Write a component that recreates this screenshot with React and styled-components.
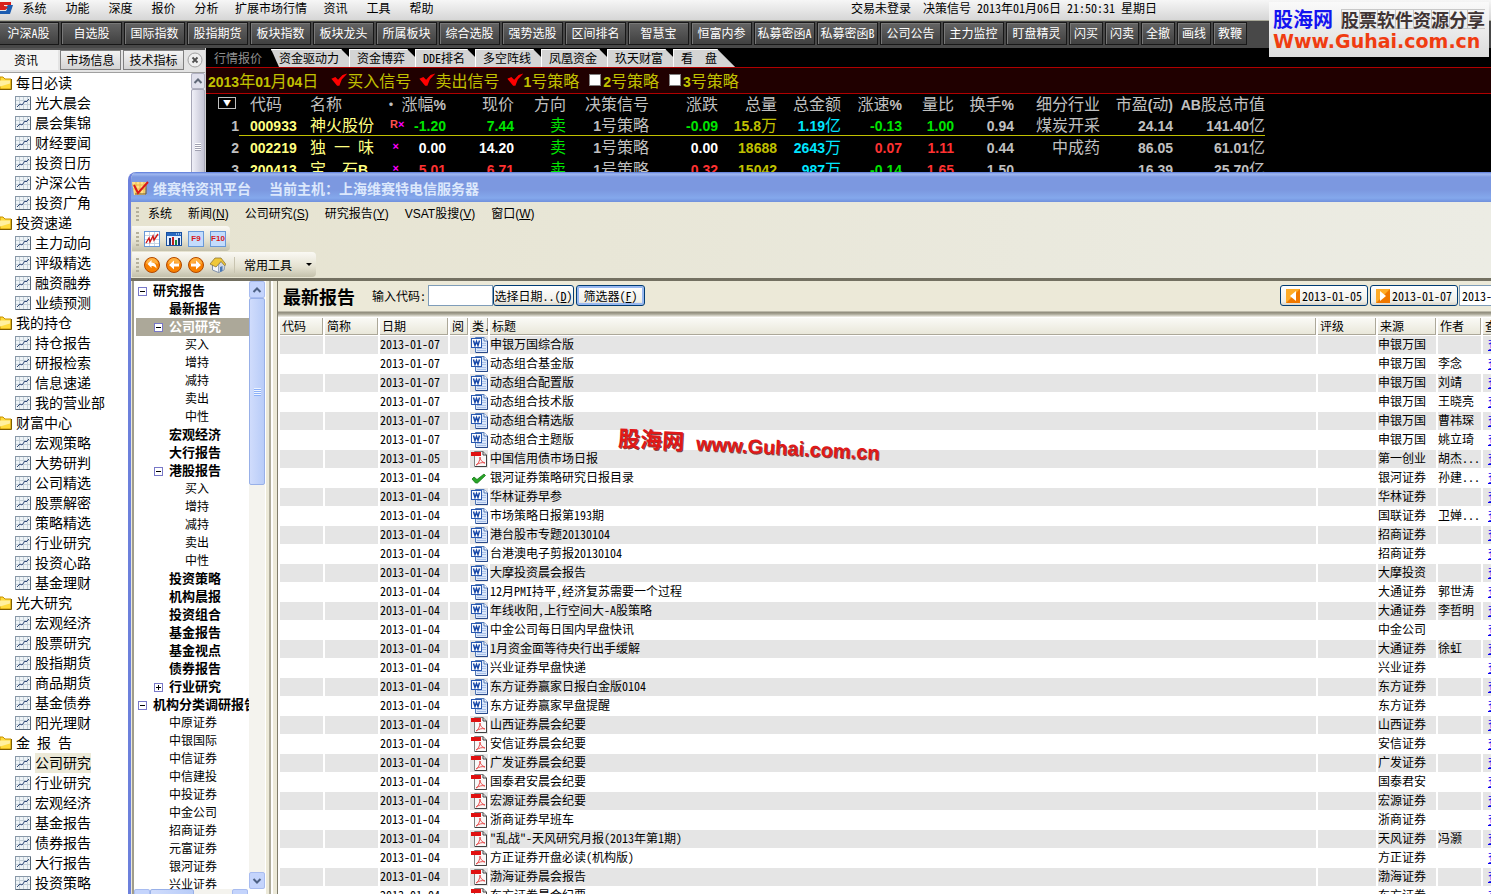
import React, { useState } from 'react';
import styled, { createGlobalStyle, css } from 'styled-components';

const sans = '"Noto Sans Mono CJK SC", "Noto Sans CJK SC", sans-serif';
const mixed = '"Liberation Sans", "Noto Sans CJK SC", sans-serif';

const GlobalStyle = createGlobalStyle`
    * { box-sizing: border-box; }
    html, body, #root { height: 100%; }
    body {
        margin: 0;
        overflow: hidden;
        background: #000;
        color: #000;
        font: 12px/16px ${sans};
    }
    button, input { font: inherit; color: inherit; }
    button { padding: 0; margin: 0; border: 0; background: none; white-space: nowrap; }
    ul { list-style: none; margin: 0; padding: 0; }
`;

/* ---------- data ---------- */

const MENU = ['系统', '功能', '深度', '报价', '分析', '扩展市场行情', '资讯', '工具', '帮助'];

const SHORTCUTS = ['沪深A股', '自选股', '国际指数', '股指期货', '板块指数', '板块龙头', '所属板块', '综合选股', '强势选股',
    '区间排名', '智慧宝', '恒富内参', '私募密函A', '私募密函B', '公司公告', '主力监控', '盯盘精灵',
    '闪买', '闪卖', '全撤', '画线', '教鞭'];

const SIDE = [
    ['每日必读', ['光大晨会', '晨会集锦', '财经要闻', '投资日历', '沪深公告', '投资广角']],
    ['投资速递', ['主力动向', '评级精选', '融资融券', '业绩预测']],
    ['我的持仓', ['持仓报告', '研报检索', '信息速递', '我的营业部']],
    ['财富中心', ['宏观策略', '大势研判', '公司精选', '股票解密', '策略精选', '行业研究', '投资心路', '基金理财']],
    ['光大研究', ['宏观经济', '股票研究', '股指期货', '商品期货', '基金债券', '阳光理财']],
    ['金 报 告', ['公司研究', '行业研究', '宏观经济', '基金报告', '债券报告', '大行报告', '投资策略']],
];

const QUOTE_TABS = ['资金驱动力', '资金博弈', 'DDE排名', '多空阵线', '凤凰资金', '玖天财富', '看　盘'];

const QUOTE_COLS = [33, 64, 80, 16, 47, 68, 52, 83, 69, 59, 64, 61, 52, 60, 86, 73, 92];
const QUOTE_HEAD = ['涨幅%', '现价', '方向', '决策信号', '涨跌', '总量', '总金额', '涨速%', '量比', '换手%', '细分行业', '市盈(动)', 'AB股总市值'];

const GREEN = '#00e600';
const RED = '#ff3232';
const WHITE = '#fff';
const GREY = '#c0c0c0';
const GOLD = '#c0c000';
const CYAN = '#00e6ff';

const QUOTES = [
    { code: '000933', name: '神火股份', r: true, cells: [['-1.20', GREEN], ['7.44', GREEN], ['卖', GREEN], ['1号策略', GREY], ['-0.09', GREEN], ['15.8万', GOLD], ['1.19亿', CYAN], ['-0.13', GREEN], ['1.00', GREEN], ['0.94', GREY], ['煤炭开采', GREY], ['24.14', GREY], ['141.40亿', GREY]] },
    { code: '002219', name: '独 一 味', cells: [['0.00', WHITE], ['14.20', WHITE], ['卖', GREEN], ['1号策略', GREY], ['0.00', WHITE], ['18688', GOLD], ['2643万', CYAN], ['0.07', RED], ['1.11', RED], ['0.44', GREY], ['中成药', GREY], ['86.05', GREY], ['61.01亿', GREY]] },
    { code: '200413', name: '宝　石B', cells: [['5.01', RED], ['6.71', RED], ['卖', GREEN], ['1号策略', GREY], ['0.32', RED], ['15042', GOLD], ['987万', CYAN], ['-0.14', GREEN], ['1.65', RED], ['1.50', GREY], ['', GREY], ['16.39', GREY], ['25.70亿', GREY]] },
];

// level, label, toggle sign
const TREE = [
    [0, '研究报告', '-'], [1, '最新报告'], [1, '公司研究', '-'],
    [2, '买入'], [2, '增持'], [2, '减持'], [2, '卖出'], [2, '中性'],
    [1, '宏观经济'], [1, '大行报告'], [1, '港股报告', '-'],
    [2, '买入'], [2, '增持'], [2, '减持'], [2, '卖出'], [2, '中性'],
    [1, '投资策略'], [1, '机构晨报'], [1, '投资组合'], [1, '基金报告'], [1, '基金视点'], [1, '债券报告'], [1, '行业研究', '+'],
    [0, '机构分类调研报告', '-'],
    [3, '中原证券'], [3, '中银国际'], [3, '中信证券'], [3, '中信建投'], [3, '中投证券'], [3, '中金公司'],
    [3, '招商证券'], [3, '元富证券'], [3, '银河证券'], [3, '兴业证券'],
];

const REPORTS = [
    ['2013-01-07', 'w', '申银万国综合版', '申银万国', ''],
    ['2013-01-07', 'w', '动态组合基金版', '申银万国', '李念'],
    ['2013-01-07', 'w', '动态组合配置版', '申银万国', '刘靖'],
    ['2013-01-07', 'w', '动态组合技术版', '申银万国', '王晓亮'],
    ['2013-01-07', 'w', '动态组合精选版', '申银万国', '曹祎琛'],
    ['2013-01-07', 'w', '动态组合主题版', '申银万国', '姚立琦'],
    ['2013-01-05', 'p', '中国信用债市场日报', '第一创业', '胡杰...'],
    ['2013-01-04', 'c', '银河证券策略研究日报目录', '银河证券', '孙建...'],
    ['2013-01-04', 'w', '华林证券早参', '华林证券', ''],
    ['2013-01-04', 'w', '市场策略日报第193期', '国联证券', '卫婵...'],
    ['2013-01-04', 'w', '港台股市专题20130104', '招商证券', ''],
    ['2013-01-04', 'w', '台港澳电子剪报20130104', '招商证券', ''],
    ['2013-01-04', 'w', '大摩投资晨会报告', '大摩投资', ''],
    ['2013-01-04', 'w', '12月PMI持平,经济复苏需要一个过程', '大通证券', '郭世涛'],
    ['2013-01-04', 'w', '年线收阳,上行空间大-A股策略', '大通证券', '李哲明'],
    ['2013-01-04', 'w', '中金公司每日国内早盘快讯', '中金公司', ''],
    ['2013-01-04', 'w', '1月资金面等待央行出手缓解', '大通证券', '徐虹'],
    ['2013-01-04', 'w', '兴业证券早盘快递', '兴业证券', ''],
    ['2013-01-04', 'w', '东方证券赢家日报白金版0104', '东方证券', ''],
    ['2013-01-04', 'w', '东方证券赢家早盘提醒', '东方证券', ''],
    ['2013-01-04', 'p', '山西证券晨会纪要', '山西证券', ''],
    ['2013-01-04', 'p', '安信证券晨会纪要', '安信证券', ''],
    ['2013-01-04', 'p', '广发证券晨会纪要', '广发证券', ''],
    ['2013-01-04', 'p', '国泰君安晨会纪要', '国泰君安', ''],
    ['2013-01-04', 'p', '宏源证券晨会纪要', '宏源证券', ''],
    ['2013-01-04', 'p', '浙商证券早班车', '浙商证券', ''],
    ['2013-01-04', 'p', '"乱战"-天风研究月报(2013年第1期)', '天风证券', '冯灏'],
    ['2013-01-04', 'p', '方正证券开盘必读(机构版)', '方正证券', ''],
    ['2013-01-04', 'p', '渤海证券晨会报告', '渤海证券', ''],
    ['2013-01-04', 'p', '东方证券晨会纪要', '东方证券', ''],
];

/* ---------- icons ---------- */

const AppLogo = () => (
    <svg width="13" height="12" viewBox="0 0 13 12">
        <path d="M0 0h11v3H4v1l4 1-3 3-5-2z" fill="#d8201c" />
        <path d="M8 3h5L10 12H0V9h6l1-2-2-1z" fill="#1c5cb0" />
        <path d="M0 0h11l-1 3H3v1l5 1-3 3H0V5h3L0 4z" fill="#d8201c" />
    </svg>
);

const FolderIcon = () => (
    <svg width="12" height="14" viewBox="0 0 12 14">
        <path d="M0 1h3l2 2h6v10H0z" fill="#ffdc3c" stroke="#c89000" />
        <path d="M0 4.500h10v3l-10 3z" fill="#fff0a0" />
        <path d="M11.500 3v10.500H0" fill="none" stroke="#806000" />
    </svg>
);

const SheetIcon = () => (
    <svg width="16" height="14" viewBox="0 0 16 14">
        <rect x=".5" y=".5" width="15" height="13" fill="#eef3f6" stroke="#8898a8" />
        <path d="M4.500 1v12M8.500 1v12M12.500 1v12M1 4.500h14M1 8.500h14" stroke="#c4d0d8" fill="none" />
        <path d="M2 11l3-3 2 1 3-4 1 1 3-3" fill="none" stroke="#304878" />
        <path d="M15.500 1v12.500H1" fill="none" stroke="#586878" />
    </svg>
);

const CloseIcon = () => (
    <svg width="16" height="16" viewBox="0 0 16 16">
        <circle cx="8" cy="8" r="7" fill="#f0f0f0" stroke="#a0a0a0" />
        <path d="M5.500 5.500l5 5M10.500 5.500l-5 5" stroke="#505050" strokeWidth="1.800" />
    </svg>
);

const TitleIcon = () => (
    <svg width="17" height="14" viewBox="0 0 17 14">
        <path d="M0 1h13l2 1-2 12H2z" fill="#ffe088" />
        <path d="M0 4h14M1 8h13M4 1v12M8 1v12M12 1v12" stroke="#e8b848" fill="none" />
        <path d="M14 4v9H3" stroke="#705830" fill="none" />
        <path d="M2 4l4 8L16 1" fill="none" stroke="#d81818" strokeWidth="2" />
    </svg>
);

const TrendIcon = () => (
    <svg width="16" height="16" viewBox="0 0 16 16">
        <rect x=".5" y=".5" width="15" height="15" fill="#fff" stroke="#6898d8" />
        <path d="M1 4.500h14M1 8.500h14M1 12.500h14M5.500 1v14M10.500 1v14" stroke="#c8d4e4" fill="none" />
        <path d="M2 12l3-5 1 4 3-6 1 4 4-6" fill="none" stroke="#d01818" strokeWidth="1.400" />
    </svg>
);

const BarsIcon = () => (
    <svg width="16" height="14" viewBox="0 0 16 14">
        <rect x=".5" y=".5" width="15" height="13" fill="#e4f0ff" stroke="#1850a0" />
        <path d="M1 2.500h14" stroke="#2868c0" strokeWidth="3" />
        <path d="M10 2h1M12 2h1M14 2h1" stroke="#fff" />
        <path d="M3 6h2v7H3z" fill="#183878" />
        <path d="M6 5h2v8H6z" fill="#c02020" />
        <path d="M9 8h2v5H9z" fill="#208838" />
        <path d="M12 6h2v7h-2z" fill="#183878" />
    </svg>
);

const Arrows = {
    undo: 'M3.500 7l4-4v2.500c3 0 5 2 5 6-1.500-2-3-2.500-5-2.500v2z',
    back: 'M3 8l5-4.500V6.500h5v3H8v3z',
    next: 'M13 8L8 3.500V6.500H3v3h5v3z',
};

const OrbIcon = ({ kind }) => (
    <svg width="16" height="16" viewBox="0 0 16 16">
        <circle cx="8" cy="8" r="7.500" fill="#f88000" stroke="#b04800" />
        <path d="M2 7a6 6 0 0 1 12 0c-4-2-8-2-12 0z" fill="#ffb040" />
        <path d={Arrows[kind]} fill="#fff" />
    </svg>
);

const HomeIcon = () => (
    <svg width="16" height="16" viewBox="0 0 16 16">
        <path d="M2.500 8v5l6 2.500 5.500-3V7L10 3z" fill="#f4f6fa" stroke="#8090a8" />
        <path d="M8.500 15.500V8L11 4l4 4-1 5z" fill="#d0d8e4" stroke="#8090a8" strokeWidth=".7" />
        <path d="M0 7l5-6h6l5 6.500-1.500 1L11 4.500 6 10z" fill="#f0c838" stroke="#806830" strokeWidth=".7" />
        <path d="M10 10l2.500-1v5L10 15z" fill="#4878b8" />
    </svg>
);

const WordIcon = () => (
    <svg width="17" height="16" viewBox="0 0 17 16">
        <path d="M4.500.5H13l3.500 3.500v11.500h-12z" fill="#dce8fa" stroke="#5078b8" />
        <path d="M13 .5V4h3.500" fill="#fff" stroke="#5078b8" />
        <path d="M11 6.500h4M11 8.500h4M6 11.500h9M6 13.500h9" stroke="#a8c0e8" />
        <path d="M16.500 4v11.500H5" fill="none" stroke="#284888" />
        <rect x=".5" y="1.500" width="10" height="9" fill="#fff" stroke="#2858b0" />
        <path d="M2.500 3.500L4 8.500l1.500-4 1.500 4L8.500 3.500" fill="none" stroke="#1848a8" strokeWidth="1.500" />
    </svg>
);

const PdfIcon = () => (
    <svg width="17" height="16" viewBox="0 0 17 16">
        <path d="M3.500.5H12L15.500 4v11.500h-12z" fill="#f8f8f8" stroke="#808080" />
        <path d="M12 .5V4h3.500v11.500H4" fill="none" stroke="#404040" />
        <path d="M0 1h10v4H0z" fill="#e01010" />
        <path d="M5 14c2-1 4-4 4-8 0 3 2 5 5 6-3-1-6 0-9 2z" fill="none" stroke="#e85050" />
    </svg>
);

const CheckIcon = () => (
    <svg width="17" height="16" viewBox="0 0 17 16">
        <path d="M1 9l2-2 3 2.500L13 4l1.500 1.500L6.500 13h-2z" fill="#28a428" stroke="#087008" strokeWidth=".7" />
    </svg>
);

const FILE_ICONS = { w: WordIcon, p: PdfIcon, c: CheckIcon };

const StepIcon = ({ back }) => (
    <svg width="14" height="14" viewBox="0 0 14 14">
        <rect width="14" height="14" fill="#f07800" />
        <path d="M0 14V0h14z" fill="#ffac28" />
        <path d={back ? 'M10 2v10L4 7z' : 'M4 2v10l6-5z'} fill="#fff" />
    </svg>
);

const ToggleIcon = ({ sign }) => (
    <svg width="9" height="9" viewBox="0 0 9 9">
        <rect x=".5" y=".5" width="8" height="8" fill="#fff" stroke="#7878c8" />
        <path d={sign === '+' ? 'M2 4.500h5M4.500 2v5' : 'M2 4.500h5'} stroke="#000" />
    </svg>
);

const Chevron = ({ dir = 'up', color = '#4d6185' }) => (
    <svg width="10" height="8" viewBox="0 0 10 8">
        <path
            d={{ up: 'M1.500 6L5 2.500 8.500 6', down: 'M1.500 2L5 5.500 8.500 2', left: 'M6.500 0L3 3.500 6.500 7', right: 'M3.500 0L7 3.500 3.500 7' }[dir]}
            fill="none" stroke={color} strokeWidth="2"
        />
    </svg>
);

/* ---------- main terminal ---------- */

const Screen = styled.div`
    position: relative;
    height: 100vh;
    display: flex;
    flex-direction: column;
    overflow: hidden;
`;

const MenuBar = styled.header`
    display: flex;
    align-items: center;
    flex: none;
    height: 21px;
    padding-bottom: 4px;
    background: linear-gradient(#f6f6f6, #d6d6d6);
    border-bottom: 1px solid #a8a898;
`;

const MenuItem = styled.button`
    min-width: 43px;
    padding: 0 7px;
`;

const Status = styled.div`
    display: flex;
    gap: 12px;
    margin-left: auto;
    padding-right: 334px;
    white-space: nowrap;

    time { margin-left: -6px; }
`;

const Shortcuts = styled.nav`
    display: flex;
    flex: none;
    gap: 2px;
    height: 27px;
    padding: 1px 0 3px;
    margin-left: -2px;
    background: #484848;
`;

const Shortcut = styled.button`
    flex: none;
    width: ${p => p.$small ? 34 : 61}px;
    padding-bottom: 2px;
    color: #fff;
    border: 1px solid #181818;
    box-shadow: inset 1px 1px #787878;
    background: linear-gradient(#646464, #404040);
`;

const Body = styled.div`
    display: flex;
    flex: 1;
    min-height: 0;
`;

const Side = styled.aside`
    display: flex;
    flex-direction: column;
    flex: none;
    width: 206px;
    background: #fff;
    border-right: 1px solid #d0d0d0;
`;

const SideTabs = styled.div`
    display: flex;
    flex: none;
    align-items: flex-end;
    gap: 2px;
    height: 25px;
    padding: 0 2px 2px 0;
    background: #e4e4e4;
    border-top: 2px solid #585858;
    border-bottom: 1px solid #a0a0a0;
`;

const SideTab = styled.button`
    flex: none;
    width: ${p => p.$active ? 58 : 61}px;
    height: 20px;
    ${p => p.$active ? css`
        padding-right: 6px;
        background: #f4f4f4;
    ` : css`
        border: 1px solid #808080;
        background: linear-gradient(#f4f4f4, #d4d4d4);
    `}
`;

const CloseButton = styled.button`
    display: flex;
    margin-left: auto;
    padding-bottom: 2px;
`;

const SideScroll = styled.div`
    display: flex;
    flex: 1;
    min-height: 0;
`;

const SideList = styled.ul`
    flex: 1;
    overflow: hidden;
    font-size: 14px;
    line-height: 18px;
`;

const SideRow = styled.li`
    display: flex;
    align-items: center;
    gap: 4px;
    height: 20px;
    padding-left: ${p => p.$leaf ? 15 : 0}px;
    white-space: pre;

    svg { flex: none; }
    span {
        padding-bottom: 2px;
        background: ${p => p.$active ? '#ece9d8' : 'none'};
    }
`;

const GreyBar = styled.div`
    display: flex;
    flex-direction: column;
    width: 14px;
    background: #e8e8f0;
`;

const GreyButton = styled.button`
    display: flex;
    align-items: center;
    justify-content: center;
    height: 16px;
    border: 1px solid #b0b0c0;
    border-radius: 2px;
    background: #e0e0ec;
`;

const GreyThumb = styled.div`
    display: flex;
    align-items: center;
    justify-content: center;
    height: 116px;
    border: 1px solid #a8a8b8;
    border-radius: 2px;
    background: linear-gradient(90deg, #f0f0f8, #c4c4d4);

    &::after {
        content: '';
        width: 6px;
        height: 8px;
        background: repeating-linear-gradient(#fff 0 1px, #a0a0b0 1px 2px);
    }
`;

const Market = styled.main`
    flex: 1;
    min-width: 0;
    color: ${GREY};
    background: #000;
    overflow: hidden;
`;

const QuoteTabs = styled.div`
    display: flex;
    height: 19px;
    padding-top: 1px;
`;

const QuoteTab = styled.button`
    flex: none;
    padding: 0 10px 0 8px;
    color: #000;
    background: #d4d4d4;
    box-shadow: inset 1px 1px #fff;
    clip-path: polygon(0 0, calc(100% - 8px) 0, 100% 8px, 100% 100%, 0 100%);

    &:first-of-type {
        color: #909090;
        width: 65px;
        background: #000;
        box-shadow: none;
        clip-path: none;
    }

    &:nth-of-type(2) {
        clip-path: polygon(0 0, calc(100% - 8px) 0, 100% 8px, 100% 100%, 8px 100%);
    }

    &:last-of-type {
        padding-right: 18px;
        clip-path: polygon(0 0, calc(100% - 18px) 0, 100% 100%, 0 100%);
    }
`;

const Signals = styled.div`
    display: flex;
    align-items: center;
    gap: 8px;
    height: 27px;
    padding: 0 0 2px 2px;
    color: ${GOLD};
    font-size: 16px;
    line-height: 24px;
    white-space: nowrap;
    background: #200000;
    border-top: 1px solid #b00000;
    border-bottom: 1px solid #b00000;

    time { margin-right: 5px; }
`;

const Signal = styled.label`
    display: flex;
    align-items: center;
`;

const Tick = styled.input`
    appearance: none;
    width: 12px;
    height: 12px;
    margin: 0 2px;
    background: #fff;
    border: 1px solid #808080;

    &:checked {
        height: 14px;
        width: 16px;
        margin: 0;
        border: 0;
        background: linear-gradient(125deg, #ff0000 70%, #a04040);
        clip-path: polygon(0 45%, 25% 32%, 42% 52%, 70% 18%, 100% 8%, 65% 50%, 50% 95%, 36% 95%);
    }
`;

const Digits = styled.b`
    font: bold 14px/14px "Liberation Sans", sans-serif;
`;

const Quotes = styled.table`
    width: 1059px;
    table-layout: fixed;
    border-collapse: separate;
    border-spacing: 0;
    font-size: 16px;
    line-height: 18px;

    th, td {
        height: 22px;
        padding: 0 0 2px;
        font-weight: normal;
        text-align: right;
        white-space: pre;
    }
    th { height: 20px; }
    th:nth-child(2), td:nth-child(2) { text-align: left; padding-left: 11px; }
    th:nth-child(3), td:nth-child(3) { text-align: left; padding-left: 7px; }
    th:nth-child(4) { text-align: left; }
    td:nth-child(2), td:nth-child(3) { color: #ffff80; }
    tr[aria-selected='true'] td:not(:first-child) { border-bottom: 1px solid ${GOLD}; }
`;

const SortBox = styled.button`
    display: block;
    width: 18px;
    height: 12px;
    margin-left: 12px;
    border: 1px solid #c0c0c0;
    color: #fff;
    font-size: 8px;
    line-height: 8px;
`;

const Mark = styled.span`
    display: flex;
    align-items: center;
    padding-left: 7px;
    color: #ff00ff;
    font: bold 11px/18px "Liberation Sans", sans-serif;

    b { width: 8px; color: #ff5050; }
`;

const Banner = styled.div`
    position: absolute;
    top: 2px;
    right: 2px;
    width: 220px;
    height: 55px;
    padding: 4px 4px 0;
    background: linear-gradient(#fafafa, #dcdcdc);
    white-space: nowrap;
`;

const BannerTop = styled.div`
    display: flex;
    align-items: center;
    justify-content: space-between;
    height: 25px;
    font-size: 18px;
    color: #403434;

    b { font-size: 20px; font-weight: 900; color: #1414f0; }
`;

const Cells = styled.span`
    font-weight: bold;
    background: repeating-linear-gradient(90deg, #c8c8c8 0 1px, transparent 1px 18px);
    line-height: 18px;
    border: 1px solid #c8c8c8;
    border-width: 1px 0;
`;

const BannerUrl = styled.div`
    color: #f03c10;
    font: bold 19px/20px "DejaVu Sans", sans-serif;
`;

/* ---------- report window ---------- */

const Window = styled.section`
    position: absolute;
    top: 172px;
    left: 128px;
    right: 0;
    bottom: 0;
    display: flex;
    flex-direction: column;
    overflow: hidden;
    border-left: 3px solid #6c80dc;
    border-top-left-radius: 8px;
    background: #ebe9d8;
`;

const TitleBar = styled.div`
    display: flex;
    align-items: center;
    flex: none;
    gap: 4px;
    height: 30px;
    padding: 2px 0 0 2px;
    margin-left: -1px;
    color: #dce8fc;
    font-weight: bold;
    font-size: 14px;
    white-space: pre;
    background: linear-gradient(#5878d8, #a0b8f0 2px, #7c98e0 5px, #7c98e0 18px, #84a8ec 26px, #7090dc);
`;

const Tools = styled.div`
    flex: none;
    height: 79px;
    background: linear-gradient(90deg, #e6e3d0, #ecece4);
    border-bottom: 3px solid #88867a;
    border-image: linear-gradient(#a8a696, #737061) 1;
`;

const WinMenu = styled.div`
    display: flex;
    align-items: center;
    gap: 16px;
    height: 24px;
    padding-left: 5px;
    font-family: ${mixed};
`;

const Strip = styled.div`
    display: flex;
    align-items: center;
    gap: 6px;
    width: ${p => p.$width}px;
    height: 25px;
    margin: 0 0 1px 1px;
    padding-left: 4px;
    border-radius: 0 4px 4px 0;
    background: linear-gradient(#faf9f4, #e4e1d0 60%, #c4c1ac);
`;

const Grip = styled.i`
    width: 3px;
    height: 14px;
    margin-right: ${p => p.$gap}px;
    background: repeating-linear-gradient(#b4b09c 0 2px, transparent 2px 4px);
`;

const ToolButton = styled.button`
    display: flex;
    align-items: center;
    justify-content: center;
    width: 16px;
    height: 16px;
`;

const KeyButton = styled(ToolButton)`
    color: #d81818;
    font: bold 8px/14px "Liberation Sans", sans-serif;
    background: #c4dcfc;
    border: 1px solid #6898d8;
`;

const CommonTools = styled.button`
    display: flex;
    align-items: center;
    gap: 14px;
    margin-left: 2px;
    padding-left: 9px;
    border-left: 1px solid #c8c4b0;

    &::after {
        content: '';
        border: 3px solid transparent;
        border-top-color: #000;
        border-bottom: 0;
    }
`;

const Panes = styled.div`
    display: flex;
    flex: 1;
    min-height: 0;
`;

const TreePane = styled.div`
    display: flex;
    flex-direction: column;
    flex: none;
    width: 133px;
    margin-left: 1px;
    background: #fff;
    border-left: 2px solid #a09d8c;
`;

const TreeRow = styled.li`
    display: flex;
    align-items: center;
    height: 18px;
    margin-left: 2px;
    padding-left: ${p => [2, 18, 49, 33][p.$level]}px;
    gap: 6px;
    font-size: ${p => p.$level < 2 ? 13 : 12}px;
    font-weight: ${p => p.$level < 2 ? 'bold' : 'normal'};
    line-height: 16px;
    white-space: nowrap;
    ${p => p.$selected && css`
        color: #fff;
        background: #aca899;
    `}

    span { padding-bottom: 2px; }
`;

const Toggle = styled.button`
    display: flex;
    flex: none;
    width: 9px;
    height: 9px;
    visibility: ${p => p.$shown ? 'visible' : 'hidden'};
`;

const TreeBody = styled.div`
    display: flex;
    flex: 1;
    min-height: 0;

    ul { flex: 1; min-width: 0; overflow: hidden; padding-top: 1px; }
`;

const BlueBar = styled.div`
    display: flex;
    flex: none;
    flex-direction: ${p => p.$flat ? 'row' : 'column'};
    width: ${p => p.$flat ? 114 : 16}px;
    height: ${p => p.$flat ? '5px' : 'auto'};
    overflow: hidden;
    background: #f4f3ee;
`;

const BlueButton = styled.button`
    display: flex;
    align-items: center;
    justify-content: center;
    flex: none;
    width: 16px;
    height: 17px;
    border: 1px solid #a8bcf0;
    border-radius: 2px;
    background: #c4d4fc;

    &:last-child { margin: auto 0 0 auto; }
`;

const BlueThumb = styled.div`
    display: flex;
    align-items: center;
    justify-content: center;
    flex: none;
    width: ${p => p.$flat ? 44 : 16}px;
    height: ${p => p.$flat ? 17 : 187}px;
    border: 1px solid #98b0e8;
    border-radius: 2px;
    background: linear-gradient(90deg, #d0dcfc, #b8ccf8);

    &::after {
        content: '';
        width: 7px;
        height: 8px;
        background: repeating-linear-gradient(#eef4fe 0 1px, #8cb0f8 1px 2px);
    }
`;

const Splitter = styled.div`
    flex: none;
    width: 12px;
    background: linear-gradient(90deg, #fff 0 1px, #ece9d8 1px 4px, #b0ad9c 4px 6px, #fff 6px 8px, #ece9d8 8px);
`;

const ReportPane = styled.div`
    display: flex;
    flex-direction: column;
    flex: 1;
    min-width: 0;
    overflow: hidden;
    background: #fff;
    border-left: 1px solid #807d6c;
`;

const Filter = styled.form`
    display: flex;
    align-items: center;
    flex: none;
    height: 36px;
    padding: 0 0 7px 5px;
    white-space: nowrap;
    background: linear-gradient(#ece9d8 30px, #8c897a 31px, #a8a595 33px, #f4f3ec 36px);

    h1 { margin: 0 17px 0 0; font-size: 18px; line-height: 24px; }
    label { margin-right: 2px; }
`;

const TextBox = styled.input`
    flex: none;
    width: ${p => p.$width}px;
    height: 21px;
    padding: 0 2px;
    border: 1px solid #7f9db9;
    background: #fff;
`;

const XpButton = styled.button`
    display: flex;
    align-items: center;
    justify-content: center;
    gap: 2px;
    flex: none;
    width: ${p => p.$width}px;
    height: 21px;
    margin-right: 2px;
    border: 1px solid #003c74;
    border-radius: 3px;
    background: linear-gradient(#fff, #f0efe8 80%, #d8d4c8);
    box-shadow: ${p => p.$focus ? 'inset 0 0 0 2px #98b8f0' : 'none'};
`;

const DateNav = styled.div`
    display: flex;
    margin: 0 -18px 0 auto;

    input { margin-left: -1px; }
`;

const Reports = styled.table`
    width: calc(100% + 32px);
    table-layout: fixed;
    border-collapse: separate;
    border-spacing: 2px 1px;
    line-height: 16px;

    th, td {
        height: 18px;
        padding: 0 0 2px;
        font-weight: normal;
        text-align: left;
        white-space: nowrap;
    }
    th {
        height: 17px;
        padding: 0 0 1px 2px;
        line-height: 14px;
        background: linear-gradient(#fafaf6, #e8e6d8);
        box-shadow: inset -1px -1px #aca899;
    }
    td:nth-child(5) { padding: 0 0 0 1px; }
    tbody tr:nth-child(odd) td { background: #e5e5e5; }
    td svg { display: block; }
    a { margin-left: 5px; color: #0000f0; }
`;

const Watermark = styled.div`
    position: absolute;
    left: 487px;
    top: 262px;
    display: flex;
    align-items: center;
    gap: 12px;
    transform: rotate(3deg);
    color: #e01818;
    font: bold 20px/24px ${mixed};
    text-shadow: 1px 1px #804040;
    pointer-events: none;

    span { font-size: 22px; }
`;

// latin runs of the quote grid are bold and one size smaller than the characters
function Mixed({ text }) {
    return text.split(/([A-Z0-9.,%()+-]+)/).map((part, i) => (
        i % 2 ? <Digits key={i}>{part}</Digits> : part
    ));
}

function SidePanel() {
    return (
        <Side>
            <SideTabs>
                <SideTab $active>资讯</SideTab>
                <SideTab>市场信息</SideTab>
                <SideTab>技术指标</SideTab>
                <CloseButton aria-label="关闭"><CloseIcon /></CloseButton>
            </SideTabs>
            <SideScroll>
                <SideList>
                    {SIDE.map(([group, items]) => (
                        <React.Fragment key={group}>
                            <SideRow><FolderIcon /><span>{group}</span></SideRow>
                            {items.map(item => (
                                <SideRow key={item} $leaf $active={group === '金 报 告' && item === '公司研究'}>
                                    <SheetIcon /><span>{item}</span>
                                </SideRow>
                            ))}
                        </React.Fragment>
                    ))}
                </SideList>
                <GreyBar>
                    <GreyButton aria-label="向上"><Chevron color="#606878" /></GreyButton>
                    <GreyThumb />
                </GreyBar>
            </SideScroll>
        </Side>
    );
}

function MarketPanel() {
    return (
        <Market>
            <QuoteTabs>
                <QuoteTab>行情报价</QuoteTab>
                {QUOTE_TABS.map(tab => <QuoteTab key={tab}>{tab}</QuoteTab>)}
            </QuoteTabs>
            <Signals>
                <time><Mixed text="2013年01月04日" /></time>
                {['买入信号', '卖出信号', '1号策略', '2号策略', '3号策略'].map((name, i) => (
                    <Signal key={name}>
                        <Tick type="checkbox" defaultChecked={i < 3} />
                        <span><Mixed text={name} /></span>
                    </Signal>
                ))}
            </Signals>
            <Quotes>
                <colgroup>{QUOTE_COLS.map((w, i) => <col key={i} width={w} />)}</colgroup>
                <thead>
                    <tr>
                        <th><SortBox>▼</SortBox></th>
                        <th>代码</th>
                        <th>名称</th>
                        <th>•</th>
                        {QUOTE_HEAD.map(h => <th key={h}><Mixed text={h} /></th>)}
                    </tr>
                </thead>
                <tbody>
                    {QUOTES.map((q, i) => (
                        <tr key={q.code} aria-selected={i === 0}>
                            <td><Digits>{i + 1}</Digits></td>
                            <td><Digits>{q.code}</Digits></td>
                            <td><Mixed text={q.name} /></td>
                            <td><Mark><b>{q.r ? 'R' : ''}</b>×</Mark></td>
                            {q.cells.map(([text, color], n) => (
                                <td key={n} style={{ color }}><Mixed text={text} /></td>
                            ))}
                        </tr>
                    ))}
                </tbody>
            </Quotes>
        </Market>
    );
}

function ReportTree() {
    const [selected, setSelected] = useState(2);

    return (
        <TreePane>
            <TreeBody>
                <ul>
                    {TREE.map(([level, label, sign], i) => (
                        <TreeRow key={i} $level={level} $selected={i === selected} onClick={() => setSelected(i)}>
                            {level < 2 && <Toggle $shown={!!sign} aria-label={label}><ToggleIcon sign={sign} /></Toggle>}
                            <span>{label}</span>
                        </TreeRow>
                    ))}
                </ul>
                <BlueBar>
                    <BlueButton aria-label="向上"><Chevron /></BlueButton>
                    <BlueThumb />
                    <BlueButton aria-label="向下"><Chevron dir="down" /></BlueButton>
                </BlueBar>
            </TreeBody>
            <BlueBar $flat>
                <BlueButton aria-label="向左"><Chevron dir="left" /></BlueButton>
                <BlueThumb $flat />
                <BlueButton aria-label="向右"><Chevron dir="right" /></BlueButton>
            </BlueBar>
        </TreePane>
    );
}

function ReportList() {
    return (
        <ReportPane>
            <Filter onSubmit={e => e.preventDefault()}>
                <h1>最新报告</h1>
                <label htmlFor="code">输入代码:</label>
                <TextBox id="code" $width={65} />
                <XpButton type="button" $width={81}>
                    <span>选择日期..(<u>D</u>)</span>
                </XpButton>
                <XpButton type="button" $width={69} $focus>
                    <span>筛选器(<u>F</u>)</span>
                </XpButton>
                <DateNav>
                    <XpButton type="button" $width={88}><StepIcon back />2013-01-05</XpButton>
                    <XpButton type="button" $width={88}><StepIcon />2013-01-07</XpButton>
                    <TextBox $width={50} aria-label="日期" defaultValue="2013-01-07" />
                </DateNav>
            </Filter>
            <Reports>
                <colgroup>
                    <col width="43" /><col width="53" /><col width="68" /><col width="18" /><col width="18" />
                    <col />
                    <col width="58" /><col width="58" /><col width="43" /><col width="38" />
                </colgroup>
                <thead>
                    <tr>
                        {['代码', '简称', '日期', '阅', '类.', '标题', '评级', '来源', '作者', '查看'].map(h => <th key={h}>{h}</th>)}
                    </tr>
                </thead>
                <tbody>
                    {REPORTS.map(([date, kind, title, source, author], i) => {
                        const Icon = FILE_ICONS[kind];
                        return (
                            <tr key={i}>
                                <td /><td />
                                <td>{date}</td>
                                <td />
                                <td><Icon /></td>
                                <td>{title}</td>
                                <td />
                                <td>{source}</td>
                                <td>{author}</td>
                                <td><a href="#view">查看</a></td>
                            </tr>
                        );
                    })}
                </tbody>
            </Reports>
        </ReportPane>
    );
}

function ReportWindow() {
    return (
        <Window>
            <TitleBar>
                <TitleIcon />
                <span>维赛特资讯平台</span>
                <span>{'  当前主机：上海维赛特电信服务器'}</span>
            </TitleBar>
            <Tools>
                <WinMenu>
                    <Grip $gap={-7} />
                    <button>系统</button>
                    <button>新闻(<u>N</u>)</button>
                    <button>公司研究(<u>S</u>)</button>
                    <button>研究报告(<u>Y</u>)</button>
                    <button>VSAT股搜(<u>V</u>)</button>
                    <button>窗口(<u>W</u>)</button>
                </WinMenu>
                <Strip $width={98}>
                    <Grip $gap={-1} />
                    <ToolButton aria-label="走势"><TrendIcon /></ToolButton>
                    <ToolButton aria-label="图表"><BarsIcon /></ToolButton>
                    <KeyButton>F9</KeyButton>
                    <KeyButton>F10</KeyButton>
                </Strip>
                <Strip $width={184}>
                    <Grip $gap={-1} />
                    <ToolButton aria-label="撤销"><OrbIcon kind="undo" /></ToolButton>
                    <ToolButton aria-label="后退"><OrbIcon kind="back" /></ToolButton>
                    <ToolButton aria-label="前进"><OrbIcon kind="next" /></ToolButton>
                    <ToolButton aria-label="主页"><HomeIcon /></ToolButton>
                    <CommonTools>常用工具</CommonTools>
                </Strip>
            </Tools>
            <Panes>
                <ReportTree />
                <Splitter />
                <ReportList />
            </Panes>
            <Watermark><span>股海网</span>www.Guhai.com.cn</Watermark>
        </Window>
    );
}

function App() {
    return (
        <Screen>
            <GlobalStyle />
            <MenuBar>
                <AppLogo />
                {MENU.map(item => <MenuItem key={item}>{item}</MenuItem>)}
                <Status>
                    <span>交易未登录</span>
                    <span>决策信号</span>
                    <time>2013年01月06日 21:50:31 星期日</time>
                </Status>
            </MenuBar>
            <Shortcuts>
                {SHORTCUTS.map(item => <Shortcut key={item} $small={item.length < 3}>{item}</Shortcut>)}
            </Shortcuts>
            <Body>
                <SidePanel />
                <MarketPanel />
            </Body>
            <Banner>
                <BannerTop><b>股海网</b><Cells>股票软件资源分享</Cells></BannerTop>
                <BannerUrl>Www.Guhai.com.cn</BannerUrl>
            </Banner>
            <ReportWindow />
        </Screen>
    );
}

export default App;
